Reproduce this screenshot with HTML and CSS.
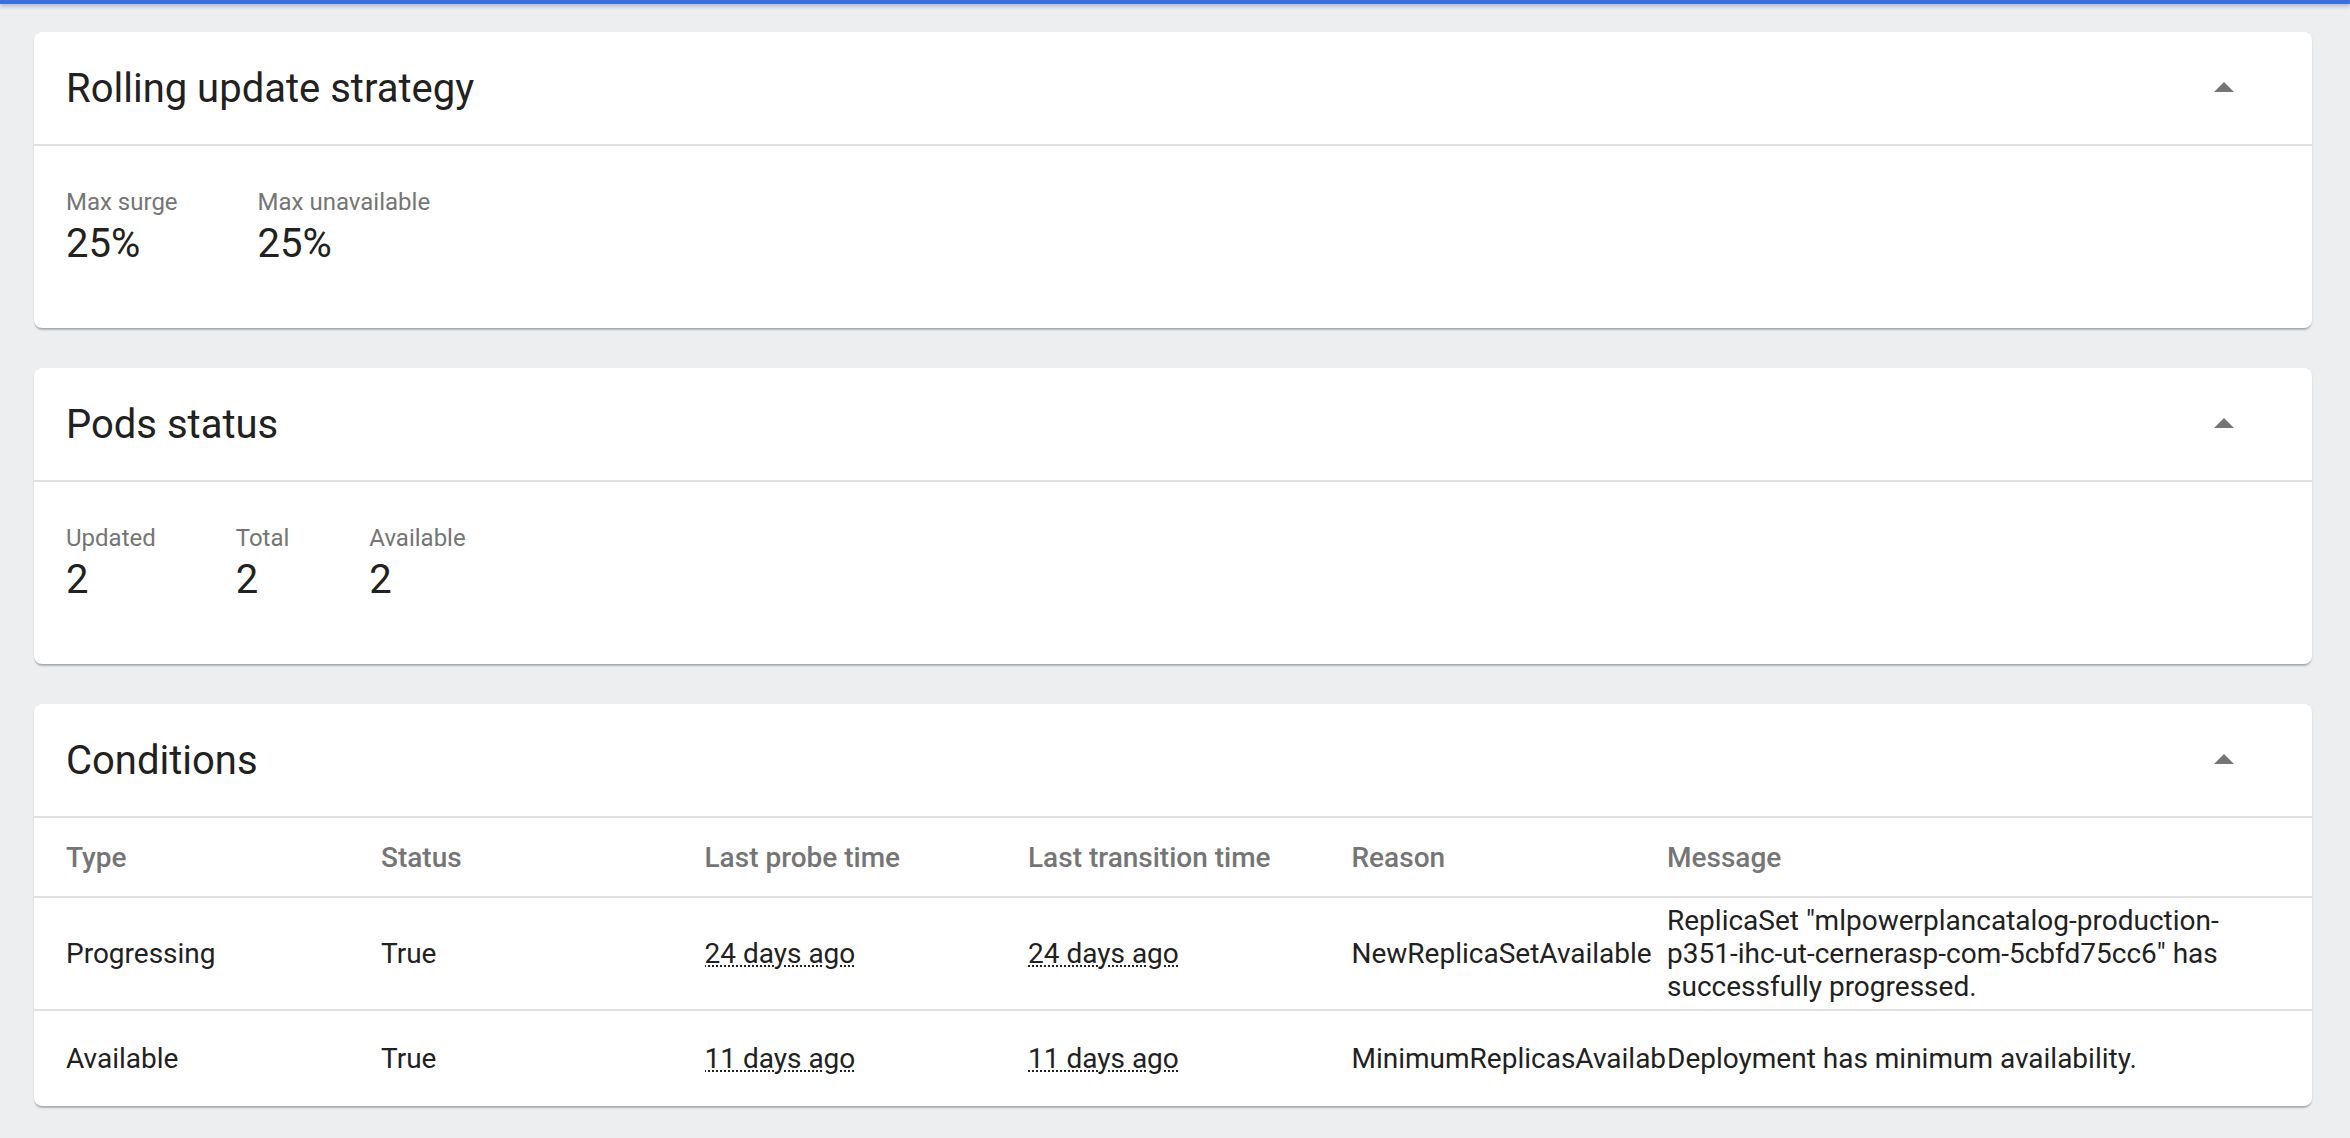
FILE: index.html
```html
<!DOCTYPE html>
<html lang="en">
<head>
<meta charset="utf-8">
<title>Deployment details</title>
<link rel="stylesheet" href="styles.css">
</head>
<body>
<div class="topbar"></div>
<main class="content">
  <section class="card">
    <header class="card-header">
      <h2 class="card-title">Rolling update strategy</h2>
      <span class="toggle"><svg viewBox="0 0 24 24" width="48" height="48"><path d="M7 14l5-5 5 5z"/></svg></span>
    </header>
    <div class="card-body">
      <div class="props">
        <div class="prop"><div class="prop-label">Max surge</div><div class="prop-value">25%</div></div>
        <div class="prop"><div class="prop-label">Max unavailable</div><div class="prop-value">25%</div></div>
      </div>
    </div>
  </section>

  <section class="card">
    <header class="card-header">
      <h2 class="card-title">Pods status</h2>
      <span class="toggle"><svg viewBox="0 0 24 24" width="48" height="48"><path d="M7 14l5-5 5 5z"/></svg></span>
    </header>
    <div class="card-body">
      <div class="props">
        <div class="prop"><div class="prop-label">Updated</div><div class="prop-value">2</div></div>
        <div class="prop"><div class="prop-label">Total</div><div class="prop-value">2</div></div>
        <div class="prop"><div class="prop-label">Available</div><div class="prop-value">2</div></div>
      </div>
    </div>
  </section>

  <section class="card">
    <header class="card-header">
      <h2 class="card-title">Conditions</h2>
      <span class="toggle"><svg viewBox="0 0 24 24" width="48" height="48"><path d="M7 14l5-5 5 5z"/></svg></span>
    </header>
    <div class="table">
      <div class="row head">
        <div class="cell">Type</div>
        <div class="cell">Status</div>
        <div class="cell">Last probe time</div>
        <div class="cell">Last transition time</div>
        <div class="cell">Reason</div>
        <div class="cell">Message</div>
      </div>
      <div class="row">
        <div class="cell">Progressing</div>
        <div class="cell">True</div>
        <div class="cell"><span class="date">24 days ago</span></div>
        <div class="cell"><span class="date">24 days ago</span></div>
        <div class="cell">NewReplicaSetAvailable</div>
        <div class="cell msg">ReplicaSet "mlpowerplancatalog-production-p351-ihc-ut-cernerasp-com-5cbfd75cc6" has successfully progressed.</div>
      </div>
      <div class="row last">
        <div class="cell">Available</div>
        <div class="cell">True</div>
        <div class="cell"><span class="date">11 days ago</span></div>
        <div class="cell"><span class="date">11 days ago</span></div>
        <div class="cell">MinimumReplicasAvailable</div>
        <div class="cell msg">Deployment has minimum availability.</div>
      </div>
    </div>
  </section>
</main>
</body>
</html>
```

FILE: styles.css
```css
html, body {
  margin: 0;
  padding: 0;
}

body {
  background: #edeef0;
  font-family: Roboto, "Liberation Sans", Arial, sans-serif;
  color: #212121;
  height: 1138px;
  overflow: hidden;
}

.topbar {
  height: 4px;
  background: #3d6fdc;
  box-shadow: 0 2px 4px rgba(0, 0, 0, 0.28);
  position: relative;
  z-index: 2;
}

.content {
  padding: 28px 38px 0 34px;
  display: flex;
  flex-direction: column;
  gap: 40px;
}

.card {
  background: #fff;
  border-radius: 8px;
  box-shadow: 0 3px 2px -1px rgba(0, 0, 0, 0.22), 0 1px 2px rgba(0, 0, 0, 0.12);
  overflow: hidden;
}

.card-header {
  height: 112px;
  border-bottom: 2px solid #e1e1e1;
  display: flex;
  align-items: center;
  justify-content: space-between;
  padding: 0 64px 0 32px;
}

.card-title {
  margin: 0;
  font-size: 40px;
  font-weight: 400;
  color: #212121;
  line-height: normal;
}

.toggle {
  display: flex;
  width: 48px;
  height: 48px;
}

.toggle svg {
  fill: #757575;
  display: block;
}

.card-body {
  padding: 42px 32px 61px;
}

.props {
  display: flex;
  gap: 80px;
}

.prop-label {
  font-size: 24px;
  color: #757575;
  line-height: normal;
}

.prop-value {
  margin-top: 4px;
  font-size: 40px;
  color: #212121;
  line-height: normal;
}

.table {
  font-size: 28px;
}

.row {
  display: grid;
  grid-template-columns: 315px 323.5px 323.5px 323.5px 315.5px 1fr;
  padding: 0 32px;
  min-height: 96px;
  box-sizing: border-box;
  border-bottom: 2px solid #e1e1e1;
  align-items: center;
}

.row.head {
  min-height: 80px;
  color: #757575;
  font-weight: 500;
}

.row.last {
  border-bottom: none;
  min-height: 95px;
}

.cell {
  padding: 6px 0;
  overflow: hidden;
  line-height: normal;
}

.cell.msg {
  padding-right: 24px;
}

.date {
  text-decoration: underline dotted;
  text-decoration-thickness: 2px;
  text-underline-offset: 2px;
}
```
